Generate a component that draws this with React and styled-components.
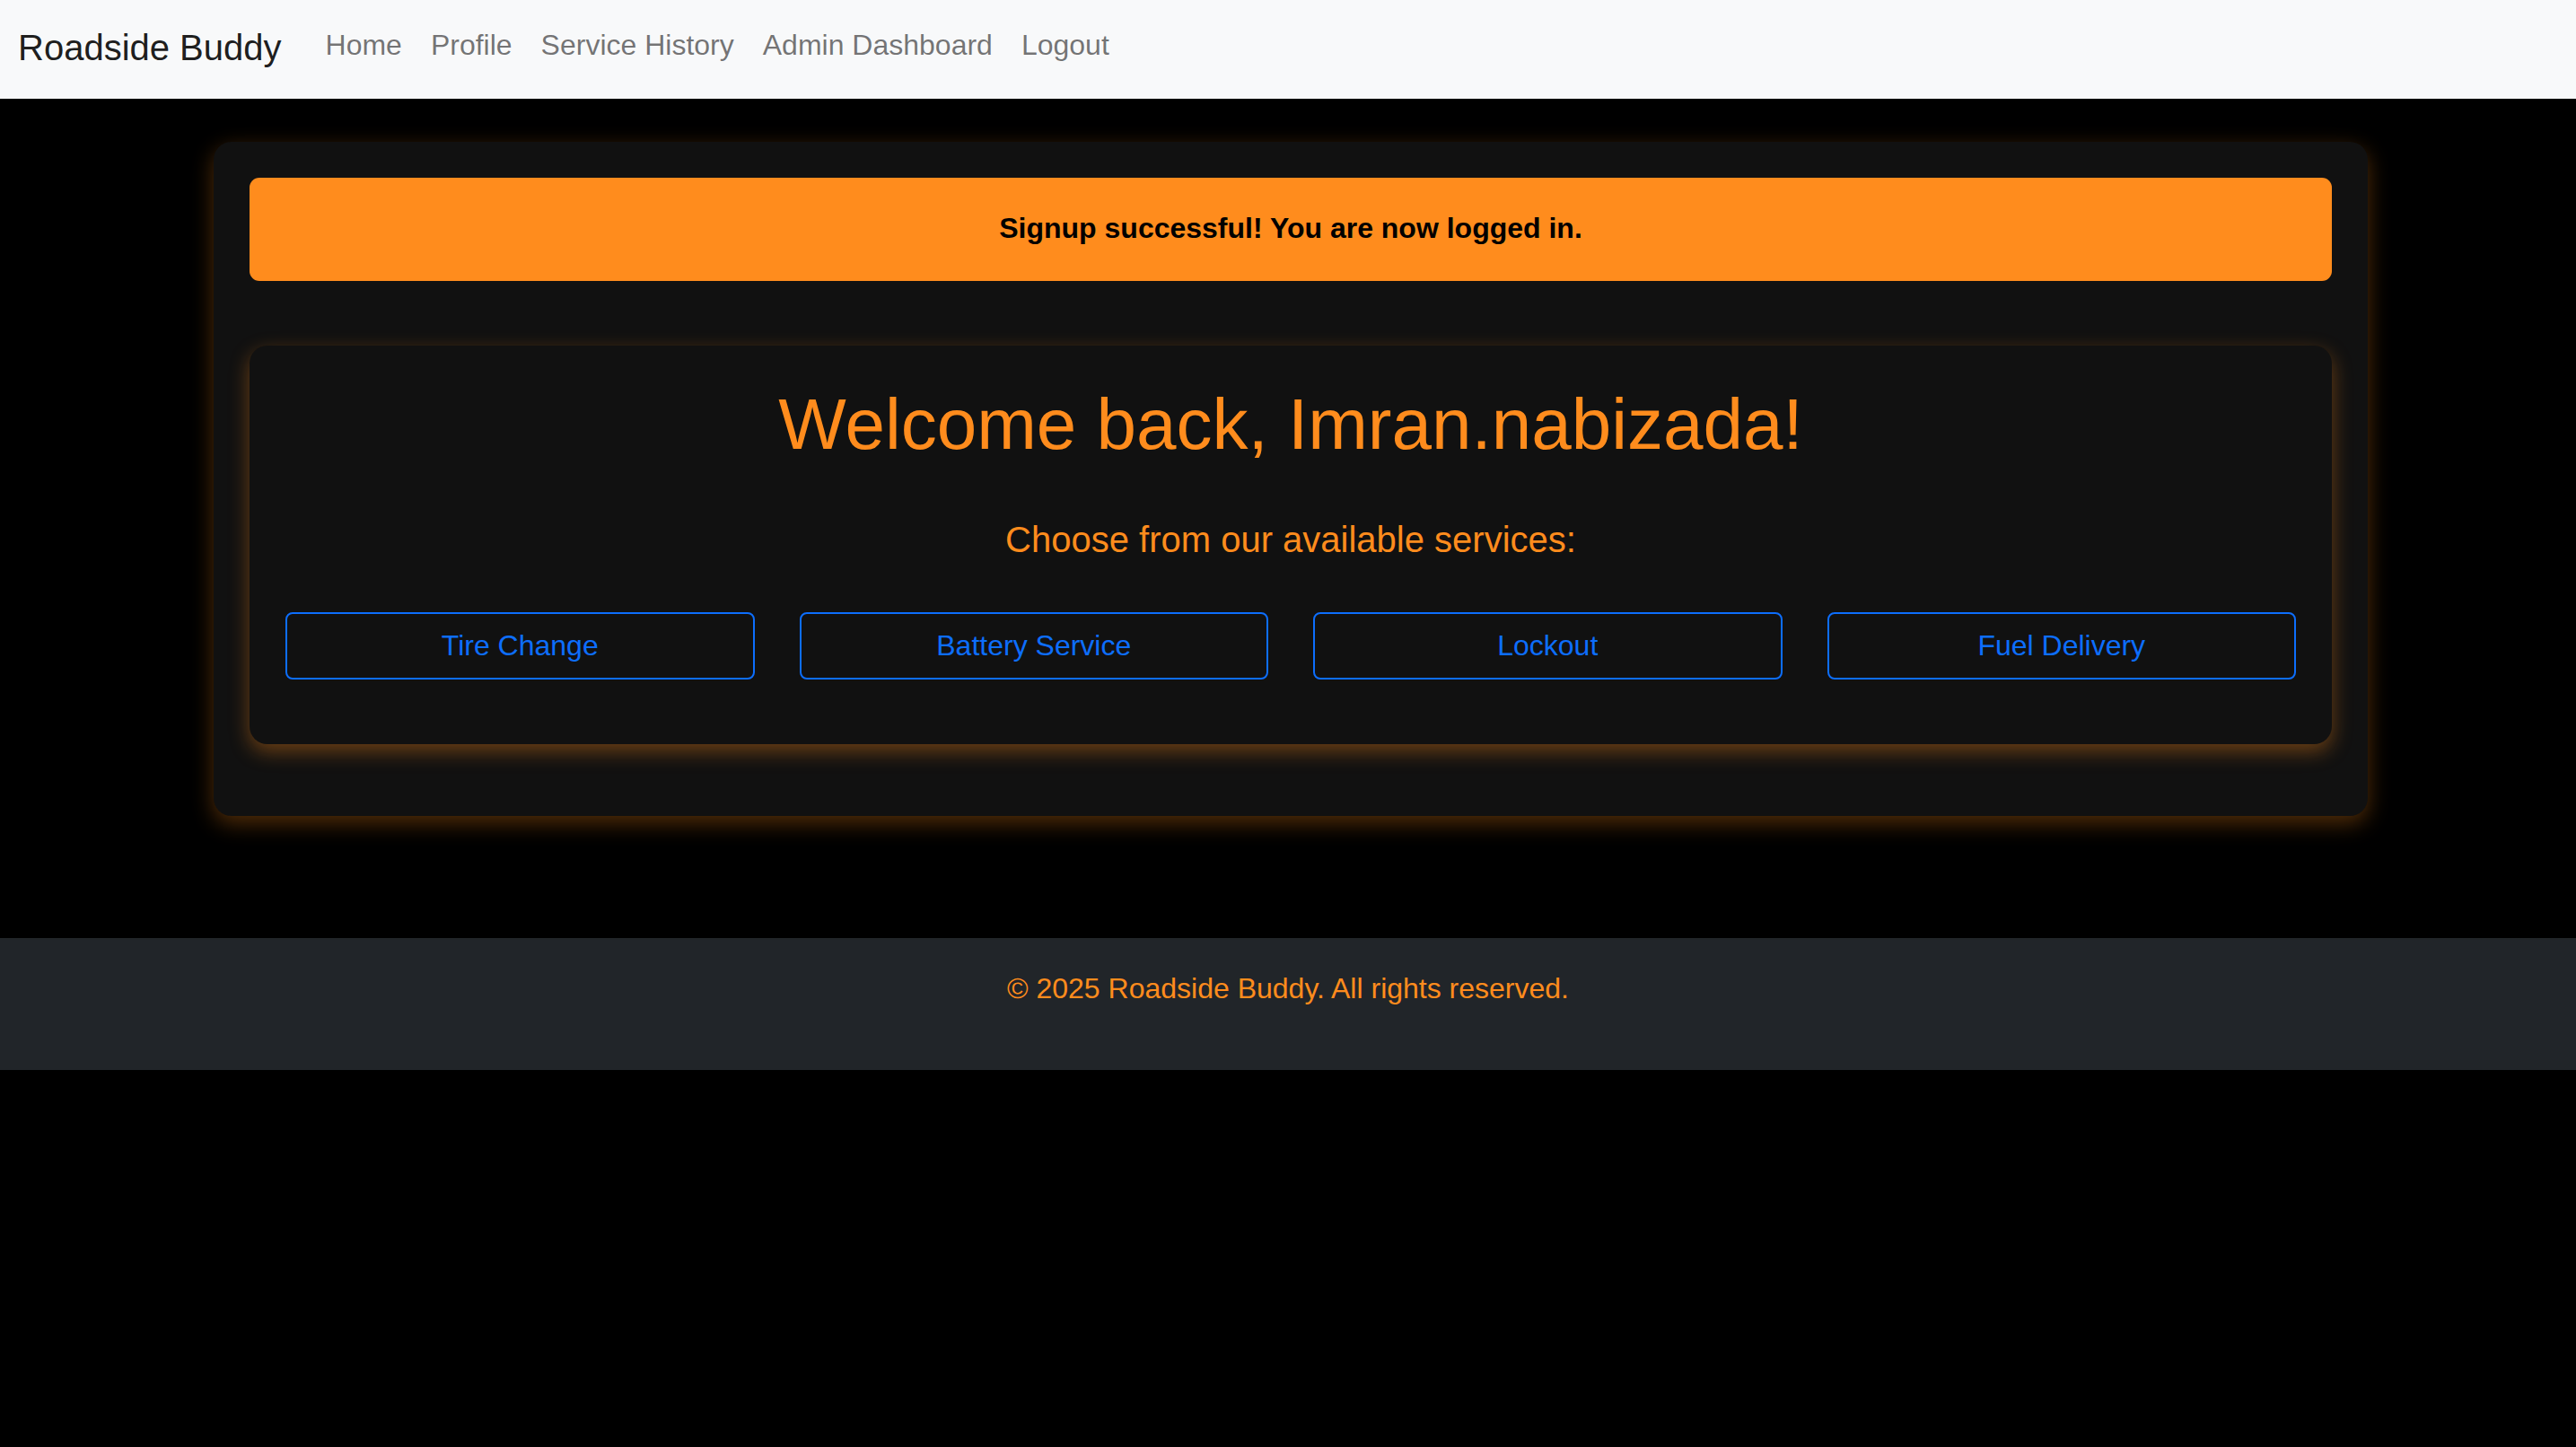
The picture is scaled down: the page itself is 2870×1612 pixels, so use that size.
import React from 'react';
import styled, { createGlobalStyle } from 'styled-components';

const GlobalStyle = createGlobalStyle`
    * {
        box-sizing: border-box;
    }
    html, body {
        margin: 0;
        padding: 0;
        background: #000;
        font-family: "Liberation Sans", Arial, Helvetica, sans-serif;
    }
`;

const Navbar = styled.nav`
    height: 110px;
    background-color: #f8f9fa;
    display: flex;
    align-items: flex-start;
    padding: 0 20px;
`;

const Brand = styled.a`
    font-size: 40px;
    line-height: 1;
    padding-top: 33px;
    margin-right: 33px;
    color: rgba(0, 0, 0, 0.9);
    text-decoration: none;
    white-space: nowrap;
`;

const NavList = styled.div`
    display: flex;
`;

const NavLink = styled.a`
    font-size: 32px;
    line-height: 1;
    padding: 34px 16px 0;
    color: rgba(0, 0, 0, 0.55);
    text-decoration: none;
    white-space: nowrap;
`;

const Main = styled.main`
    padding: 48px 0 136px 6px;
`;

const OuterCard = styled.div`
    width: 2400px;
    margin: 0 auto;
    background-color: #111;
    border-radius: 20px;
    padding: 40px 40px 80px;
    box-shadow: 0 8px 24px rgba(255, 140, 26, 0.32);
`;

const Alert = styled.div`
    background-color: #ff8c1d;
    color: #000;
    border-radius: 11px;
    padding: 33px 20px 35px;
    font-size: 32px;
    line-height: 47px;
    font-weight: 700;
    text-align: center;
    margin-bottom: 72px;
`;

const ServiceCard = styled.div`
    background-color: #111;
    border-radius: 20px;
    padding: 40px 40px 72px;
    text-align: center;
    box-shadow: 0 8px 22px rgba(255, 140, 26, 0.38);
`;

const Title = styled.h1`
    margin: 0;
    font-size: 80px;
    font-weight: 400;
    line-height: 95px;
    color: #ff8c1d;
`;

const Subtitle = styled.h5`
    margin: 58px 0 57px;
    font-size: 40px;
    font-weight: 400;
    line-height: 47px;
    color: #ff8c1d;
`;

const ButtonGrid = styled.div`
    display: grid;
    grid-template-columns: repeat(4, 1fr);
    gap: 50px;
`;

const ServiceButton = styled.button`
    background: transparent;
    border: 2px solid #0d6efd;
    border-radius: 8px;
    color: #0d6efd;
    font-family: inherit;
    font-size: 32px;
    line-height: 47px;
    padding: 12px;
    cursor: pointer;
    &:hover {
        background-color: #0d6efd;
        color: #fff;
    }
`;

const Footer = styled.footer`
    background-color: #212529;
    color: #ff8c1d;
    text-align: center;
    font-size: 32px;
    line-height: 47px;
    padding: 33px 0 67px;
`;

const services = ['Tire Change', 'Battery Service', 'Lockout', 'Fuel Delivery'];
const links = ['Home', 'Profile', 'Service History', 'Admin Dashboard', 'Logout'];

const App = () => {
    return (
        <>
            <GlobalStyle />
            <Navbar>
                <Brand href="#">Roadside Buddy</Brand>
                <NavList>
                    {links.map((l) => (
                        <NavLink key={l} href="#">{l}</NavLink>
                    ))}
                </NavList>
            </Navbar>
            <Main>
                <OuterCard>
                    <Alert>Signup successful! You are now logged in.</Alert>
                    <ServiceCard>
                        <Title>Welcome back, Imran.nabizada!</Title>
                        <Subtitle>Choose from our available services:</Subtitle>
                        <ButtonGrid>
                            {services.map((s) => (
                                <ServiceButton key={s}>{s}</ServiceButton>
                            ))}
                        </ButtonGrid>
                    </ServiceCard>
                </OuterCard>
            </Main>
            <Footer>© 2025 Roadside Buddy. All rights reserved.</Footer>
        </>
    );
};

export default App;
